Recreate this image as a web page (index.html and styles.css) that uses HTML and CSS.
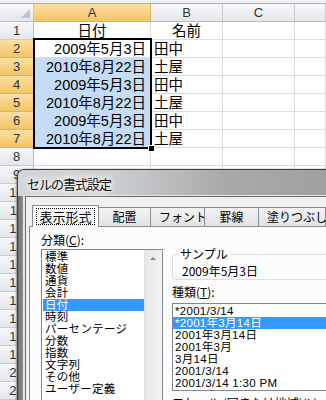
FILE: index.html
```html
<!DOCTYPE html>
<html lang="ja">
<head>
    <meta charset="UTF-8">
    <title>セルの書式設定</title>
    <link rel="stylesheet" href="styles.css">
</head>
<body>
    <div class="app">
        <div class="ribbon-edge"></div>
        <div class="sheet">
            <div class="row head">
                <div class="corner"><span class="corner-tri"></span></div>
                <div class="ch hl">A</div>
                <div class="ch">B</div>
                <div class="ch">C</div>
                <div class="ch"></div>
            </div>
            <div class="row"><div class="rh">1</div><div class="c mid">日付</div><div class="c mid">名前</div><div class="c"></div><div class="c"></div></div>
            <div class="row"><div class="rh hl">2</div><div class="c num">2009年5月3日</div><div class="c">田中</div><div class="c"></div><div class="c"></div></div>
            <div class="row"><div class="rh hl">3</div><div class="c num picked">2010年8月22日</div><div class="c">土屋</div><div class="c"></div><div class="c"></div></div>
            <div class="row"><div class="rh hl">4</div><div class="c num picked">2009年5月3日</div><div class="c">田中</div><div class="c"></div><div class="c"></div></div>
            <div class="row"><div class="rh hl">5</div><div class="c num picked">2010年8月22日</div><div class="c">土屋</div><div class="c"></div><div class="c"></div></div>
            <div class="row"><div class="rh hl">6</div><div class="c num picked">2009年5月3日</div><div class="c">田中</div><div class="c"></div><div class="c"></div></div>
            <div class="row"><div class="rh hl">7</div><div class="c num picked">2010年8月22日</div><div class="c">土屋</div><div class="c"></div><div class="c"></div></div>
            <div class="row"><div class="rh">8</div><div class="c"></div><div class="c"></div><div class="c"></div><div class="c"></div></div>
            <div class="row"><div class="rh">9</div><div class="c"></div><div class="c"></div><div class="c"></div><div class="c"></div></div>
            <div class="row"><div class="rh">10</div><div class="c"></div><div class="c"></div><div class="c"></div><div class="c"></div></div>
            <div class="row"><div class="rh">11</div><div class="c"></div><div class="c"></div><div class="c"></div><div class="c"></div></div>
            <div class="row"><div class="rh">12</div><div class="c"></div><div class="c"></div><div class="c"></div><div class="c"></div></div>
            <div class="row"><div class="rh">13</div><div class="c"></div><div class="c"></div><div class="c"></div><div class="c"></div></div>
            <div class="row"><div class="rh">14</div><div class="c"></div><div class="c"></div><div class="c"></div><div class="c"></div></div>
            <div class="row"><div class="rh">15</div><div class="c"></div><div class="c"></div><div class="c"></div><div class="c"></div></div>
            <div class="row"><div class="rh">16</div><div class="c"></div><div class="c"></div><div class="c"></div><div class="c"></div></div>
            <div class="row"><div class="rh">17</div><div class="c"></div><div class="c"></div><div class="c"></div><div class="c"></div></div>
            <div class="row"><div class="rh">18</div><div class="c"></div><div class="c"></div><div class="c"></div><div class="c"></div></div>
            <div class="row"><div class="rh">19</div><div class="c"></div><div class="c"></div><div class="c"></div><div class="c"></div></div>
            <div class="row"><div class="rh">20</div><div class="c"></div><div class="c"></div><div class="c"></div><div class="c"></div></div>
            <div class="row"><div class="rh">21</div><div class="c"></div><div class="c"></div><div class="c"></div><div class="c"></div></div>
        </div>

        <div class="selection"><span class="handle"></span></div>

        <div class="dialog">
            <div class="dialog-title">セルの書式設定</div>
            <div class="client">
                <div class="tabs">
                    <div class="tab current-tab"><span class="focus">表示形式</span></div>
                    <div class="tab">配置</div>
                    <div class="tab">フォント</div>
                    <div class="tab">罫線</div>
                    <div class="tab">塗りつぶし</div>
                </div>
                <div class="panel">
                    <div class="col-left">
                        <p class="label">分類(<u>C</u>):</p>
                        <div class="listbox category">
                            <ul class="items">
                                <li>標準</li>
                                <li>数値</li>
                                <li>通貨</li>
                                <li>会計</li>
                                <li class="selected">日付</li>
                                <li>時刻</li>
                                <li>パーセンテージ</li>
                                <li>分数</li>
                                <li>指数</li>
                                <li>文字列</li>
                                <li>その他</li>
                                <li>ユーザー定義</li>
                            </ul>
                            <div class="scrollbar"><span class="arrow-up"></span></div>
                        </div>
                    </div>
                    <div class="col-right">
                        <fieldset class="sample">
                            <legend>サンプル</legend>
                            <div class="sample-value">2009年5月3日</div>
                        </fieldset>
                        <p class="label">種類(<u>T</u>):</p>
                        <div class="listbox types">
                            <ul class="items">
                                <li>*2001/3/14</li>
                                <li class="selected">*2001年3月14日</li>
                                <li>2001年3月14日</li>
                                <li>2001年3月</li>
                                <li>3月14日</li>
                                <li>2001/3/14</li>
                                <li>2001/3/14 1:30 PM</li>
                            </ul>
                        </div>
                        <p class="label">ロケール (国または地域)(<u>L</u>):</p>
                    </div>
                </div>
            </div>
        </div>
    </div>
</body>
</html>
```

FILE: styles.css
```css
body {
    margin: 0;
    background: #fff;
    font-family: "Noto Sans CJK JP", sans-serif;
    color: #000;
    overflow: hidden;
}
.app {
    position: relative;
    width: 326px;
    height: 400px;
    overflow: hidden;
}
.ribbon-edge {
    height: 3px;
    background: #eef0f3;
    border-bottom: 1px solid #a9b0b8;
}
.row {
    display: grid;
    grid-template-columns: 34px 117px 72px 72px 1fr;
    height: 18px;
}
.row > div {
    box-sizing: border-box;
    height: 18px;
    border-right: 1px solid #dadcdd;
    border-bottom: 1px solid #dadcdd;
}
.head > div {
    background: linear-gradient(to bottom, #f7f8fa, #e4e7eb);
    border-right: 1px solid #c5cad1;
    border-bottom: 1px solid #b8bec6;
}
.corner {
    position: relative;
}
.corner-tri {
    position: absolute;
    right: 3px;
    bottom: 3px;
    width: 0;
    height: 0;
    border-left: 9px solid transparent;
    border-bottom: 9px solid #bfc4ca;
}
.ch,
.rh {
    font-family: "Liberation Sans", "Noto Sans CJK JP", sans-serif;
    font-size: 13px;
    line-height: 17px;
    text-align: center;
    color: #333;
}
.rh {
    background: linear-gradient(to bottom, #f7f8fa, #e4e7eb);
    border-right: 1px solid #b8bec6 !important;
    border-bottom: 1px solid #c5cad1 !important;
}
.head .hl,
.rh.hl {
    background: linear-gradient(to bottom, #fbe0a4, #f3c462);
    border-right-color: #e2b25a !important;
    border-bottom-color: #e2b25a !important;
}
.head .hl {
    border-bottom: 1px solid #f29c38;
}
.c {
    font-family: "Liberation Sans", "Noto Sans CJK JP", sans-serif;
    font-size: 14.5px;
    line-height: 18px;
    padding: 0 3px;
    white-space: nowrap;
}
.num {
    text-align: right;
    padding-right: 4px;
}
.mid {
    text-align: center;
}
.picked {
    background: #c4dcf5;
}
.selection {
    position: absolute;
    left: 33px;
    top: 38px;
    width: 119px;
    height: 111px;
    box-sizing: border-box;
    border: 2px solid #000;
}
.handle {
    position: absolute;
    right: -5px;
    bottom: -5px;
    width: 5px;
    height: 5px;
    background: #000;
    border: 1px solid #fff;
}

/* dialog */
.dialog {
    position: absolute;
    left: 17px;
    top: 169px;
    width: 340px;
    height: 250px;
    border: 1px solid #3e3e3e;
    border-radius: 7px 7px 0 0;
    background: linear-gradient(to right, #6e6e6e 0, #8f8f8f 5px, #9a9a9a 40%, #9c9c9c 100%);
    box-shadow: -1px 0 2px rgba(0, 0, 0, 0.4);
}
.dialog-title {
    height: 26px;
    padding-left: 9px;
    font-size: 13px;
    line-height: 28px;
    letter-spacing: -1px;
    color: #111;
    text-shadow: 0 0 6px #fff, 0 0 8px #fff, 0 0 10px #fff;
    border-radius: 6px 6px 0 0;
    background: linear-gradient(to right, #d3d7dc 0, #c9cccf 30%, #aaaaaa 60%, #9d9d9d 100%);
}
.client {
    margin-left: 7px;
    height: 100%;
    background: #f0f0f0;
    border-top: 1px solid #6a6a6a;
    border-left: 1px solid #6a6a6a;
    box-shadow: -2px -1px 0 #e3e6ea;
    padding: 8px 0 0 3px;
}
.tabs {
    display: flex;
    align-items: flex-end;
    padding-left: 3px;
    height: 21px;
    position: relative;
    z-index: 1;
}
.tab {
    box-sizing: border-box;
    height: 19px;
    padding: 0 8px;
    font-size: 12px;
    line-height: 18px;
    text-align: center;
    background: linear-gradient(to bottom, #f3f3f3, #e3e3e3);
    border: 1px solid #898c95;
    border-bottom: none;
    margin-left: -1px;
    white-space: nowrap;
}
.tab:nth-child(2) { width: 53px; }
.tab:nth-child(3) { width: 55px; }
.tab:nth-child(4) { width: 55px; }
.tab:nth-child(5) { width: 68px; }
.current-tab {
    width: 67px;
    height: 22px;
    margin-bottom: -1px;
    margin-left: 0;
    background: #fcfcfc;
    padding: 2px 3px 0;
    position: relative;
}
.focus {
    display: block;
    font-size: 13px;
    line-height: 15px;
    border: 1px dotted #000;
}
.panel {
    display: flex;
    gap: 9px;
    height: 220px;
    background: #fcfcfc;
    border: 1px solid #898c95;
    padding: 5px 0 0 11px;
}
.label {
    margin: 0;
    font-size: 12px;
    line-height: 16px;
    white-space: nowrap;
}
.col-left {
    width: 122px;
}
.col-left .label {
    margin-bottom: 1px;
}
.listbox {
    box-sizing: border-box;
    background: #fff;
    border: 1px solid #828790;
}
.category {
    display: flex;
    height: 160px;
}
.items {
    list-style: none;
    margin: 0;
    padding: 1px 0 0 1px;
    flex: 1;
}
.items li {
    font-family: "Liberation Sans", "Noto Sans CJK JP", sans-serif;
    font-size: 11.5px;
    line-height: 12px;
    height: 12px;
    padding-left: 2px;
    letter-spacing: 0.3px;
    white-space: nowrap;
}
.items .selected {
    background: #3399ff;
    color: #fff;
}
.scrollbar {
    width: 17px;
    background: linear-gradient(to right, #e6e6e6, #f4f4f4);
    border-left: 1px solid #e0e0e0;
    position: relative;
}
.arrow-up {
    position: absolute;
    left: 5px;
    top: 7px;
    width: 0;
    height: 0;
    border-left: 3px solid transparent;
    border-right: 3px solid transparent;
    border-bottom: 3px solid #8a8a8a;
}
.col-right {
    flex: 1;
    padding-top: 16px;
}
.sample {
    margin: 0;
    padding: 4px 0 1px 9px;
    border: 1px solid #d5dfe5;
    border-radius: 4px;
}
.sample legend {
    font-size: 12px;
    line-height: 12px;
    padding: 0 2px;
    margin-left: -4px;
}
.sample-value {
    font-size: 12px;
    line-height: 14px;
}
.col-right .label {
    margin-top: 4px;
}
.types {
    margin-top: 3px;
    height: 88px;
}
.types .items {
    padding-left: 0;
}
.types .items li {
    padding-left: 2px;
}
```
